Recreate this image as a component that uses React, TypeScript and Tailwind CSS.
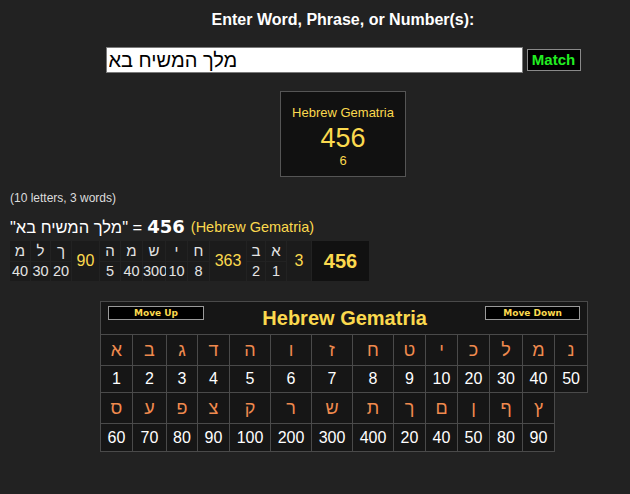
import React from 'react';

const YELLOW = 'text-[#fbd94e]';

type Cell =
  | { kind: 'letter'; l: string; v: number; w: string }
  | { kind: 'sub'; v: number; w: string }
  | { kind: 'total'; v: number; w: string };

const breakdown: Cell[] = [
  { kind: 'letter', l: 'מ', v: 40, w: 'w-[20px]' },
  { kind: 'letter', l: 'ל', v: 30, w: 'w-[19px]' },
  { kind: 'letter', l: 'ך', v: 20, w: 'w-[20px]' },
  { kind: 'sub', v: 90, w: 'w-[27px]' },
  { kind: 'letter', l: 'ה', v: 5, w: 'w-[20px]' },
  { kind: 'letter', l: 'מ', v: 40, w: 'w-[21px]' },
  { kind: 'letter', l: 'ש', v: 300, w: 'w-[22px]' },
  { kind: 'letter', l: 'י', v: 10, w: 'w-[21px]' },
  { kind: 'letter', l: 'ח', v: 8, w: 'w-[21px]' },
  { kind: 'sub', v: 363, w: 'w-[36px]' },
  { kind: 'letter', l: 'ב', v: 2, w: 'w-[18px]' },
  { kind: 'letter', l: 'א', v: 1, w: 'w-[20px]' },
  { kind: 'sub', v: 3, w: 'w-[24px]' },
  { kind: 'total', v: 456, w: 'w-[57px]' },
];

const colWidths = [
  'w-[32px]', 'w-[34px]', 'w-[31px]', 'w-[32px]', 'w-[41px]', 'w-[41px]', 'w-[41px]',
  'w-[41px]', 'w-[32px]', 'w-[32px]', 'w-[32px]', 'w-[33px]', 'w-[32px]', 'w-[33px]',
];

const row1 = [
  ['א', 1], ['ב', 2], ['ג', 3], ['ד', 4], ['ה', 5], ['ו', 6], ['ז', 7],
  ['ח', 8], ['ט', 9], ['י', 10], ['כ', 20], ['ל', 30], ['מ', 40], ['נ', 50],
] as const;

const row2 = [
  ['ס', 60], ['ע', 70], ['פ', 80], ['צ', 90], ['ק', 100], ['ר', 200], ['ש', 300],
  ['ת', 400], ['ך', 20], ['ם', 40], ['ן', 50], ['ף', 80], ['ץ', 90],
] as const;

function Breakdown() {
  return (
    <div className="flex gap-px ml-[10px] mt-[2px] h-[40px]">
      {breakdown.map((c, i) => {
        if (c.kind === 'letter') {
          return (
            <div key={i} className={`${c.w} flex flex-col gap-px`}>
              <div className="h-[20px] bg-[#1b1b1b] text-[#e4e4e4] text-[15px] leading-[20px] text-center">
                {c.l}
              </div>
              <div className="h-[19px] bg-[#1b1b1b] text-[#e4e4e4] text-[14.5px] leading-[19px] text-center whitespace-nowrap">
                {c.v}
              </div>
            </div>
          );
        }
        if (c.kind === 'sub') {
          return (
            <div
              key={i}
              className={`${c.w} bg-[#1b1b1b] ${YELLOW} text-[16px] flex items-center justify-center`}
            >
              {c.v}
            </div>
          );
        }
        return (
          <div
            key={i}
            className={`${c.w} bg-[#111111] ${YELLOW} text-[20px] font-bold flex items-center justify-center`}
          >
            {c.v}
          </div>
        );
      })}
    </div>
  );
}

function CipherTable() {
  const cell = 'border border-[#4a4a4a] bg-[#161616] text-center p-0';
  return (
    <table className="table-fixed border-collapse w-[487px] ml-[100px] mt-[20px]">
      <colgroup>
        {colWidths.map((w, i) => (
          <col key={i} className={w} />
        ))}
      </colgroup>
      <tbody>
        <tr className="h-[33px]">
          <td colSpan={14} className="border border-[#4a4a4a] bg-[#161616] p-0 align-top">
            <div className="flex justify-between items-start px-[7px]">
              <button className="mt-[4px] w-[96px] h-[14px] bg-black border border-[#9a9a9a] text-[#fbd94e] text-[9px] font-bold leading-[12px] font-['DejaVu_Sans',sans-serif]">
                Move Up
              </button>
              <div className={`mt-[4px] text-[20px] font-bold leading-[24px] ${YELLOW}`}>
                Hebrew Gematria
              </div>
              <button className="mt-[4px] w-[95px] h-[14px] bg-black border border-[#9a9a9a] text-[#fbd94e] text-[9px] font-bold leading-[12px] font-['DejaVu_Sans',sans-serif]">
                Move Down
              </button>
            </div>
          </td>
        </tr>
        <tr className="h-[31px]">
          {row1.map(([l], i) => (
            <td key={i} className={`${cell} text-[#f08a4e] text-[18px]`}>
              {l}
            </td>
          ))}
        </tr>
        <tr className="h-[27px]">
          {row1.map(([, v], i) => (
            <td key={i} className={`${cell} text-white text-[16px]`}>
              {v}
            </td>
          ))}
        </tr>
        <tr className="h-[31px]">
          {row2.map(([l], i) => (
            <td key={i} className={`${cell} text-[#f08a4e] text-[18px]`}>
              {l}
            </td>
          ))}
        </tr>
        <tr className="h-[28px]">
          {row2.map(([, v], i) => (
            <td key={i} className={`${cell} text-white text-[16px]`}>
              {v}
            </td>
          ))}
        </tr>
      </tbody>
    </table>
  );
}

export default function App() {
  const phrase = 'מלך המשיח בא';
  return (
    <div className="w-[630px] h-[494px] overflow-hidden bg-[#222222] font-['Liberation_Sans','DejaVu_Sans',sans-serif]">
      <div className="w-[686px] flex flex-col">
        <div className="pt-[11px] text-center text-white text-[16px] font-bold leading-[18px]">
          Enter Word, Phrase, or Number(s):
        </div>

        <div className="mt-[18px] flex items-center justify-center gap-[4px]">
          <input
            readOnly
            value={phrase}
            className="w-[417px] h-[26px] bg-white border border-[#7a7a7a] pl-[2px] text-black text-[20px] leading-[24px] outline-none"
          />
          <button className="w-[54px] h-[22px] bg-black border border-[#8a8a8a] text-[#22ee22] text-[15px] font-bold leading-[20px]">
            Match
          </button>
        </div>

        <div className="mt-[18px] self-center w-[126px] h-[86px] bg-[#111111] border border-[#555555] flex flex-col items-center pt-[13px]">
          <div className={`text-[13px] leading-[16px] ${YELLOW}`}>Hebrew Gematria</div>
          <div className={`mt-[2px] text-[27px] leading-[30px] ${YELLOW}`}>456</div>
          <div className={`text-[13px] leading-[16px] ${YELLOW}`}>6</div>
        </div>

        <div className="mt-[14px] ml-[10px] text-[12px] leading-[14px] text-[#dddddd]">
          (10 letters, 3 words)
        </div>

        <div className="mt-[10px] ml-[10px] h-[24px] flex items-center text-white leading-[24px]">
          <span className="text-[16.5px]">
            "<bdi>{phrase}</bdi>" =
          </span>
          <span className="ml-[5px] font-['DejaVu_Sans',sans-serif] font-bold text-[18px]">456</span>
          <span className={`ml-[6px] text-[14.5px] ${YELLOW}`}>(Hebrew Gematria)</span>
        </div>

        <Breakdown />
        <CipherTable />
      </div>
    </div>
  );
}
